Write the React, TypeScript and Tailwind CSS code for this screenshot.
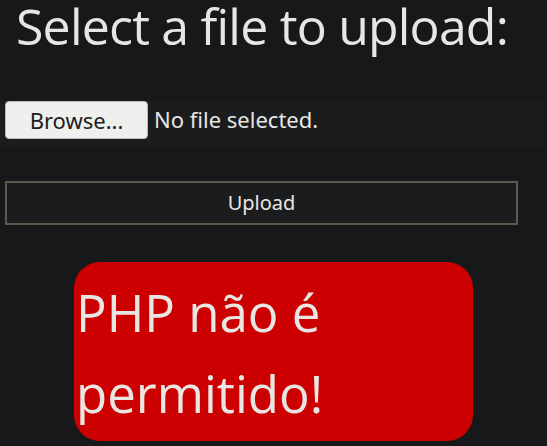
export default function App() {
  return (
    <div className="min-h-screen bg-[#17181a] text-[#e8e6e3] font-['Open_Sans',sans-serif] overflow-hidden">
      <h1 className="text-center text-[50px] leading-[50px] tracking-[-0.8px] pt-[1px] pr-[23px]">
        Select a file to upload:
      </h1>
      <div className="mt-[50px] mr-[4px] h-[45px] bg-[#1b1c1e] flex items-start pl-[5px]">
        <button className="h-[38px] w-[143px] rounded-[4px] border border-[#b9b9b9] bg-[#efefee] text-[#1d1d1d] text-[22px] leading-[30px] font-['Noto_Sans',sans-serif]">
          Browse...
        </button>
        <span className="ml-[6px] mt-[3px] text-[22px] leading-[30px] font-['Noto_Sans',sans-serif]">
          No file selected.
        </span>
      </div>
      <button className="mt-[35px] ml-[5px] w-[513px] h-[44px] border-2 border-[#5e584d] bg-[#1b1c1e] text-[20px] font-['Noto_Sans',sans-serif]">
        Upload
      </button>
      <div className="mt-[37px] ml-[74px] w-[399px] h-[179px] rounded-[26px] bg-[#cc0000] text-[51px] leading-[81px] pl-[2px] pt-[10px]">
        PHP não é permitido!
      </div>
    </div>
  );
}
